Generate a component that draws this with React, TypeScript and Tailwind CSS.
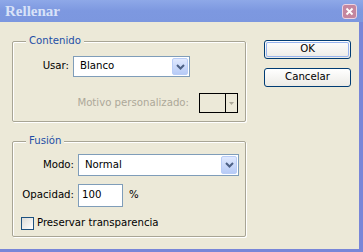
import React from "react";

const ui = { fontFamily: '"DejaVu Sans Condensed", "Liberation Sans", Arial, sans-serif' };

function Chevron() {
  return (
    <svg width="9" height="6" viewBox="0 0 9 6">
      <path d="M1 1 L4.5 4.5 L8 1" stroke="#4d6185" strokeWidth="2" fill="none" />
    </svg>
  );
}

function Select({ value, className }: { value: string; className: string }) {
  return (
    <div className={`flex h-[21px] items-stretch border border-[#7f9db9] bg-white p-px ${className}`}>
      <span className="flex flex-1 items-center pl-[5px] text-[11.3px] text-black">{value}</span>
      <div className="flex w-[16px] items-center justify-center rounded-[2px] border border-[#b9cdf7] bg-gradient-to-b from-[#e0e9fe] to-[#b7cbf6]">
        <Chevron />
      </div>
    </div>
  );
}

function Button({ label, isDefault }: { label: string; isDefault?: boolean }) {
  return (
    <div className="flex h-[19px] w-[87px] items-center justify-center rounded-[3px] border border-[#003c74] bg-gradient-to-b from-white to-[#ecebe6] p-px">
      <div
        className={`flex h-full w-full items-center justify-center rounded-[2px] text-[11.3px] text-black ${
          isDefault ? "shadow-[inset_0_0_0_1px_#98b4ee]" : ""
        }`}
      >
        {label}
      </div>
    </div>
  );
}

function Group({ title, className, children }: { title: string; className: string; children: React.ReactNode }) {
  return (
    <div className={`relative rounded-[2px] border border-[#a8a595] shadow-[1px_1px_0_#ffffff,inset_1px_1px_0_#ffffff] ${className}`}>
      <span className="absolute left-[13px] top-[-8px] bg-[#ece9d8] px-[3px] text-[11.3px] leading-[14px] text-[#1f4fa6]">
        {title}
      </span>
      {children}
    </div>
  );
}

export default function App() {
  return (
    <div className="flex h-[252px] w-[363px] flex-col overflow-hidden bg-[#7886d8]" style={ui}>
      <div className="flex h-[22px] items-center justify-between bg-gradient-to-b from-[#8ea8e8] via-[#7d98e0] to-[#7c97df] pl-[5px] pr-[6px]">
        <span
          className="text-[15px] font-bold leading-none text-[#d8e2f8]"
          style={{ fontFamily: '"Liberation Serif", "Times New Roman", serif' }}
        >
          Rellenar
        </span>
        <div className="flex h-[15px] w-[15px] items-center justify-center rounded-[3px] border border-[#ecd3e2] bg-[#c4869f]">
          <svg width="9" height="9" viewBox="0 0 9 9">
            <path d="M1.5 1.5 L7.5 7.5 M7.5 1.5 L1.5 7.5" stroke="#ffffff" strokeWidth="1.8" />
          </svg>
        </div>
      </div>
      <div className="mb-[3px] mr-[4px] flex flex-1 bg-[#ece9d8]">
        <div className="flex flex-col gap-[19px] pl-[12px] pt-[19px]">
          <Group title="Contenido" className="h-[81px] w-[234px]">
            <div className="flex flex-col pt-[14px]">
              <div className="flex items-center">
                <span className="w-[60px] pr-[4px] text-right text-[11.3px] text-black">Usar:</span>
                <Select value="Blanco" className="w-[117px]" />
              </div>
              <div className="mt-[16px] flex items-center justify-end pr-[7px]">
                <span className="mr-[10px] text-[11.3px] text-[#aca899]">Motivo personalizado:</span>
                <div className="flex h-[20px] w-[39px] border border-black">
                  <div className="flex-1 border-r border-black" />
                  <div className="flex w-[11px] items-center justify-center">
                    <svg width="5" height="3" viewBox="0 0 5 3">
                      <path d="M0 0 L5 0 L2.5 3 Z" fill="#aca899" />
                    </svg>
                  </div>
                </div>
              </div>
            </div>
          </Group>
          <Group title="Fusión" className="h-[96px] w-[234px]">
            <div className="flex flex-col pt-[12px]">
              <div className="flex items-center">
                <span className="w-[65px] pr-[4px] text-right text-[11.3px] text-black">Modo:</span>
                <Select value="Normal" className="h-[22px] w-[161px]" />
              </div>
              <div className="mt-[8px] flex items-center">
                <span className="w-[65px] pr-[4px] text-right text-[11.3px] text-black">Opacidad:</span>
                <div className="flex h-[23px] w-[45px] items-center border border-[#7f9db9] bg-white pl-[3px] text-[11.3px] text-black">
                  100
                </div>
                <span className="ml-[6px] text-[11.3px] text-black">%</span>
              </div>
              <div className="mt-[8px] flex items-center pl-[8px]">
                <div className="h-[13px] w-[13px] border border-[#1c5180] bg-gradient-to-br from-[#dcdcd7] to-[#ffffff]" />
                <span className="ml-[3px] text-[11.3px] text-black">Preservar transparencia</span>
              </div>
            </div>
          </Group>
        </div>
        <div className="flex flex-col gap-[9px] pl-[18px] pt-[18px]">
          <Button label="OK" isDefault />
          <Button label="Cancelar" />
        </div>
      </div>
    </div>
  );
}
